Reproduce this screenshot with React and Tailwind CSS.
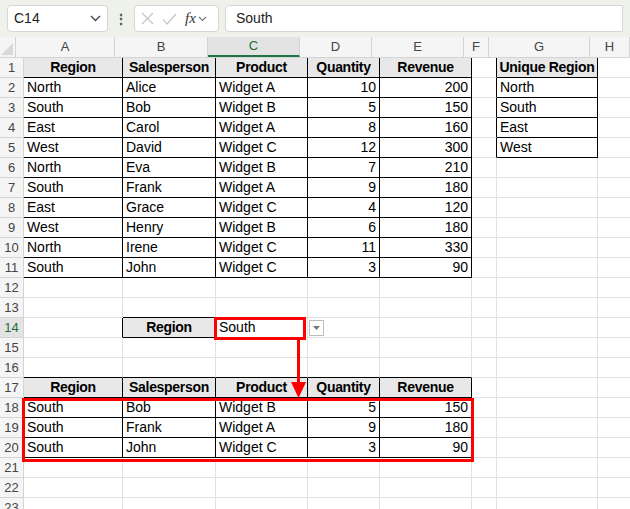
import React from "react";

const cols = ["A", "B", "C", "D", "E", "F", "G", "H"];
const widths = [99, 93, 92, 72, 92, 25, 101, 40];

const main = [
  ["North", "Alice", "Widget A", 10, 200],
  ["South", "Bob", "Widget B", 5, 150],
  ["East", "Carol", "Widget A", 8, 160],
  ["West", "David", "Widget C", 12, 300],
  ["North", "Eva", "Widget B", 7, 210],
  ["South", "Frank", "Widget A", 9, 180],
  ["East", "Grace", "Widget C", 4, 120],
  ["West", "Henry", "Widget B", 6, 180],
  ["North", "Irene", "Widget C", 11, 330],
  ["South", "John", "Widget C", 3, 90],
];
const heads = ["Region", "Salesperson", "Product", "Quantity", "Revenue"];
const uniq = ["North", "South", "East", "West"];
const res = [
  ["South", "Bob", "Widget B", 5, 150],
  ["South", "Frank", "Widget A", 9, 180],
  ["South", "John", "Widget C", 3, 90],
];

function cellAt(r, c) {
  if (r >= 1 && r <= 11 && c <= 4) {
    if (r === 1) return { v: heads[c], head: true, boxed: true };
    const v = main[r - 2][c];
    return { v, right: typeof v === "number", boxed: true };
  }
  if (c === 6 && r >= 1 && r <= 5) {
    if (r === 1) return { v: "Unique Region", head: true, boxed: true };
    return { v: uniq[r - 2], boxed: true };
  }
  if (r === 14 && c === 1) return { v: "Region", head: true, boxed: true };
  if (r === 14 && c === 2) return { v: "South" };
  if (r >= 17 && r <= 20 && c <= 4) {
    if (r === 17) return { v: heads[c], head: true, boxed: true };
    const v = res[r - 18][c];
    return { v, right: typeof v === "number", boxed: true };
  }
  return null;
}
const boxed = (r, c) => !!(cellAt(r, c) && cellAt(r, c).boxed);

export default function App() {
  const rows = Array.from({ length: 23 }, (_, i) => i + 1);
  return (
    <div className="relative w-[630px] h-[509px] overflow-hidden bg-white" style={{ fontFamily: '"Liberation Sans", Arial, sans-serif' }}>
      {/* formula bar */}
      <div className="h-[37px] bg-[#eef2ea] flex items-center px-[7px] gap-[6px] text-[14px] text-[#222]">
        <div className="w-[101px] h-[27px] bg-white border border-[#d6d6d6] rounded-[4px] flex items-center justify-between px-[6px]">
          <span>C14</span>
          <svg width="11" height="7" viewBox="0 0 11 7"><path d="M1 1l4.5 4.5L10 1" fill="none" stroke="#444" strokeWidth="1.3" /></svg>
        </div>
        <div className="text-[#555] font-bold text-[14px] leading-none">⋮</div>
        <div className="w-[85px] h-[27px] bg-white border border-[#d6d6d6] rounded-[4px] flex items-center gap-[8px] px-[6px]">
          <svg width="13" height="13" viewBox="0 0 13 13"><path d="M1 1l11 11M12 1L1 12" stroke="#c4c4c4" strokeWidth="1.2" /></svg>
          <svg width="15" height="12" viewBox="0 0 15 12"><path d="M1 6l4 5L14 1" fill="none" stroke="#c4c4c4" strokeWidth="1.2" /></svg>
          <span className="italic text-[15px] text-[#333]" style={{ fontFamily: '"Liberation Serif", serif' }}>fx</span>
          <svg width="9" height="6" viewBox="0 0 9 6" className="-ml-[6px]"><path d="M1 1l3.5 3.5L8 1" fill="none" stroke="#777" strokeWidth="1.1" /></svg>
        </div>
        <div className="flex-1 h-[27px] bg-white border border-[#d6d6d6] rounded-l-[4px] flex items-center px-[10px]">South</div>
      </div>
      {/* column headers */}
      <div className="flex h-[21px] text-[13px] text-[#444] bg-[#f5f5f5] border-b border-[#d4d4d4]">
        <div className="w-[24px] border-r border-[#d4d4d4] relative">
          <svg width="12" height="12" viewBox="0 0 12 12" className="absolute right-[2px] bottom-[2px]"><path d="M12 0V12H0Z" fill="#d9d9d9" /></svg>
        </div>
        {cols.map((c, i) => (
          <div key={c} style={{ width: widths[i] }} className={"shrink-0 flex items-center justify-center border-r border-[#d4d4d4] " + (c === "C" ? "bg-[#e3e3e3] text-[#1f6d3a] border-b-2 border-b-[#217346]" : "")}>{c}</div>
        ))}
      </div>
      {/* rows */}
      {rows.map((r) => (
        <div key={r} className="flex h-[20px] text-[14px] text-black">
          <div className={"w-[24px] shrink-0 flex items-center justify-center text-[13px] border-r border-b border-[#d4d4d4] " + (r === 14 ? "bg-[#e3e3e3] text-[#1f6d3a]" : "bg-[#f5f5f5] text-[#444]")}>{r}</div>
          {cols.map((c, ci) => {
            const cell = cellAt(r, ci);
            const rb = boxed(r, ci) || boxed(r, ci + 1);
            const bb = boxed(r, ci) || boxed(r + 1, ci);
            return (
              <div
                key={c}
                style={{ width: widths[ci] }}
                className={
                  "shrink-0 flex items-center px-[3px] whitespace-nowrap overflow-visible border-r border-b " +
                  (rb ? "border-r-black " : "border-r-[#e1e1e1] ") +
                  (bb ? "border-b-black " : "border-b-[#e1e1e1] ") +
                  (cell && cell.head ? "bg-[#e8e8e8] font-bold justify-center tracking-[-0.3px] " : "") +
                  (cell && cell.right ? "justify-end " : "")
                }
              >
                {cell ? cell.v : ""}
              </div>
            );
          })}
        </div>
      ))}
      {/* dropdown arrow */}
      <div className="absolute left-[309px] top-[320px] w-[15px] h-[16px] border border-[#bdbdbd] bg-white flex items-center justify-center">
        <svg width="7" height="4" viewBox="0 0 7 4"><path d="M0 0h7L3.5 4Z" fill="#777" /></svg>
      </div>
      {/* red annotations */}
      <div className="absolute left-[214px] top-[317px] w-[92px] h-[23px] border-[3px] border-[#ff0000]" />
      <div className="absolute left-[297px] top-[340px] w-[3px] h-[44px] bg-[#ff0000]" />
      <svg className="absolute left-[291px] top-[382px]" width="15" height="16" viewBox="0 0 15 16"><path d="M0 0H15L7.5 16Z" fill="#ff0000" /></svg>
      <div className="absolute left-[22px] top-[398px] w-[452px] h-[64px] border-[3px] border-[#ff0000]" />
    </div>
  );
}
